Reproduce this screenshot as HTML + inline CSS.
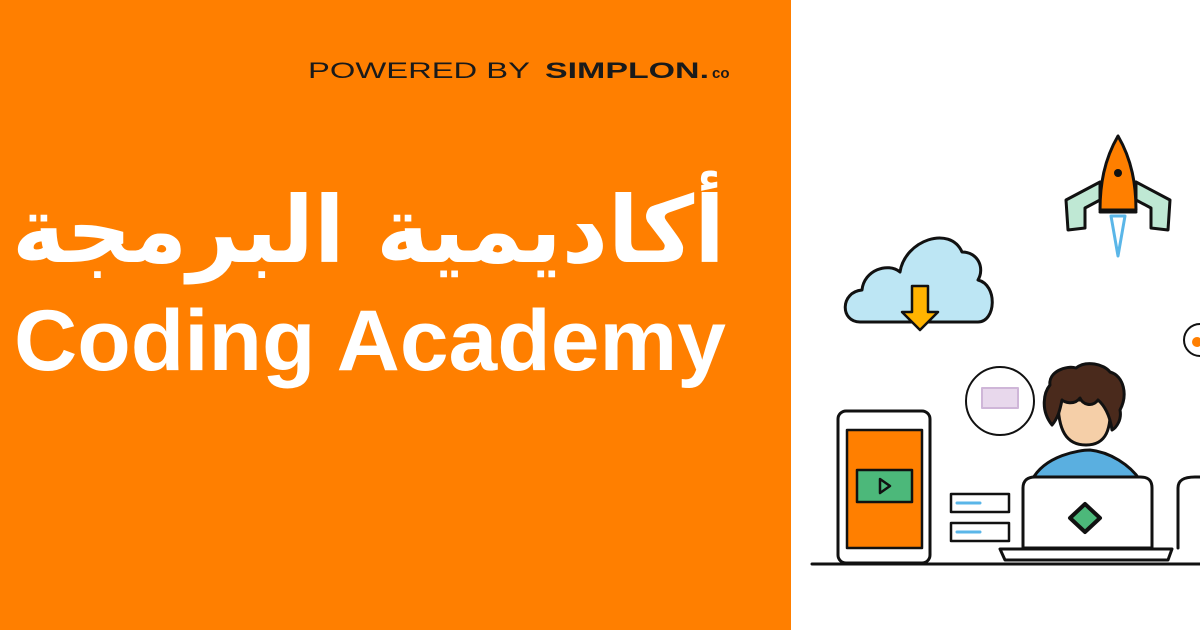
<!DOCTYPE html>
<html><head><meta charset="utf-8"><style>
html,body{margin:0;padding:0;width:1200px;height:630px;overflow:hidden;background:#fff}
</style></head><body>
<svg width="1200" height="630" viewBox="0 0 1200 630" xmlns="http://www.w3.org/2000/svg">
<rect x="0" y="0" width="791" height="630" fill="#FF7F00"/>
<text x="308" y="78" font-family="Liberation Sans, sans-serif" font-size="22" fill="#1a1a1a" textLength="222" lengthAdjust="spacingAndGlyphs">POWERED BY</text>
<text x="545" y="78" font-family="Liberation Sans, sans-serif" font-size="22" font-weight="bold" fill="#1a1a1a" textLength="164" lengthAdjust="spacingAndGlyphs">SIMPLON.</text>
<text x="712" y="78" font-family="Liberation Sans, sans-serif" font-size="15" font-weight="bold" fill="#1a1a1a">co</text>
<text x="725" y="262" text-anchor="start" direction="rtl" unicode-bidi="embed" font-family="DejaVu Sans, sans-serif" font-size="92" font-weight="bold" fill="#fff" textLength="713" lengthAdjust="spacingAndGlyphs">أكاديمية البرمجة</text>
<text x="14" y="370" font-family="Liberation Sans, sans-serif" font-size="86" font-weight="bold" fill="#fff" textLength="712" lengthAdjust="spacingAndGlyphs">Coding Academy</text>
<g stroke="#111" stroke-width="3" stroke-linejoin="round" stroke-linecap="round">
<!-- rocket -->
<path d="M1066 200 L1100 182 L1100 200 L1085 208 L1085 228 L1068 230 Z" fill="#bfe8d4"/>
<path d="M1170 200 L1136 182 L1136 200 L1151 208 L1151 228 L1168 230 Z" fill="#bfe8d4"/>
<path d="M1118 136 C1104 160 1100 185 1100 210 L1136 210 C1136 185 1132 160 1118 136 Z" fill="#FF7F00"/>
<circle cx="1118" cy="173" r="4" fill="#111" stroke="none"/>
<path d="M1100 212 L1136 212" />
<path d="M1111 216 L1118 256 L1125 216 Z" fill="#fff" stroke="#5ab6e8"/>
<!-- cloud -->
<path d="M860 322 C840 322 840 292 862 290 C864 270 888 262 900 272 C905 240 950 225 962 252 C978 252 985 268 978 280 C998 285 996 322 978 322 Z" fill="#bde6f4"/>
<path d="M912 286 L928 286 L928 312 L938 312 L920 330 L902 312 L912 312 Z" fill="#FFB300" stroke="#111" stroke-width="2.5"/>
<!-- bubble -->
<circle cx="1000" cy="401" r="34" fill="#fff" stroke-width="2"/>
<rect x="982" y="388" width="36" height="20" fill="#e8d8ec" stroke="#cfb6d8" stroke-width="2"/>
<!-- phone -->
<rect x="838" y="411" width="92" height="152" rx="8" fill="#fff"/>
<rect x="847" y="430" width="75" height="118" fill="#FF7F00" stroke-width="2.5"/>
<rect x="857" y="470" width="55" height="32" fill="#4cb87a" stroke-width="2.5"/>
<path d="M880 479 L890 486 L880 493 Z" fill="none" stroke-width="2.5"/>
<!-- servers -->
<rect x="951" y="494" width="58" height="18" fill="#fff" stroke-width="2.5"/>
<rect x="951" y="523" width="58" height="18" fill="#fff" stroke-width="2.5"/>
<path d="M957 503 L980 503 M957 532 L980 532" stroke="#5ab6e8" stroke-width="3"/>
<!-- person -->
<path d="M1032 480 C1045 455 1080 450 1090 450 C1110 452 1130 465 1140 480 Z" fill="#5aafe0"/>
<path d="M1058 400 C1058 430 1066 445 1086 445 C1106 445 1112 430 1110 400 Z" fill="#f5cfa8"/>
<path d="M1052 425 C1040 410 1044 392 1050 385 C1048 372 1066 365 1076 368 C1086 360 1104 364 1110 372 C1124 376 1128 395 1120 410 C1122 420 1116 428 1112 430 C1110 415 1104 405 1098 400 C1092 408 1082 404 1080 398 C1074 406 1064 402 1062 400 C1060 410 1058 418 1052 425 Z" fill="#4a2a1c"/>
<!-- laptops -->
<path d="M1023 548 L1023 488 C1023 480 1028 477 1035 477 L1140 477 C1148 477 1152 480 1152 488 L1152 548 Z" fill="#fff"/>
<path d="M1000 549 L1172 549 L1168 560 L1005 560 Z" fill="#fff"/>
<path d="M1085 504 L1100 518 L1085 532 L1070 518 Z" fill="#4cb87a" stroke-width="4"/>
<path d="M1178 548 L1178 488 C1178 480 1184 477 1195 477 L1200 477" fill="#fff"/>
<circle cx="1200" cy="340" r="16" fill="#fff" stroke-width="2"/>
<circle cx="1197" cy="342" r="5" fill="#FF7F00" stroke="none"/>
<path d="M812 564 L1200 564" stroke-width="3"/>
</g>
</svg>
</body></html>
